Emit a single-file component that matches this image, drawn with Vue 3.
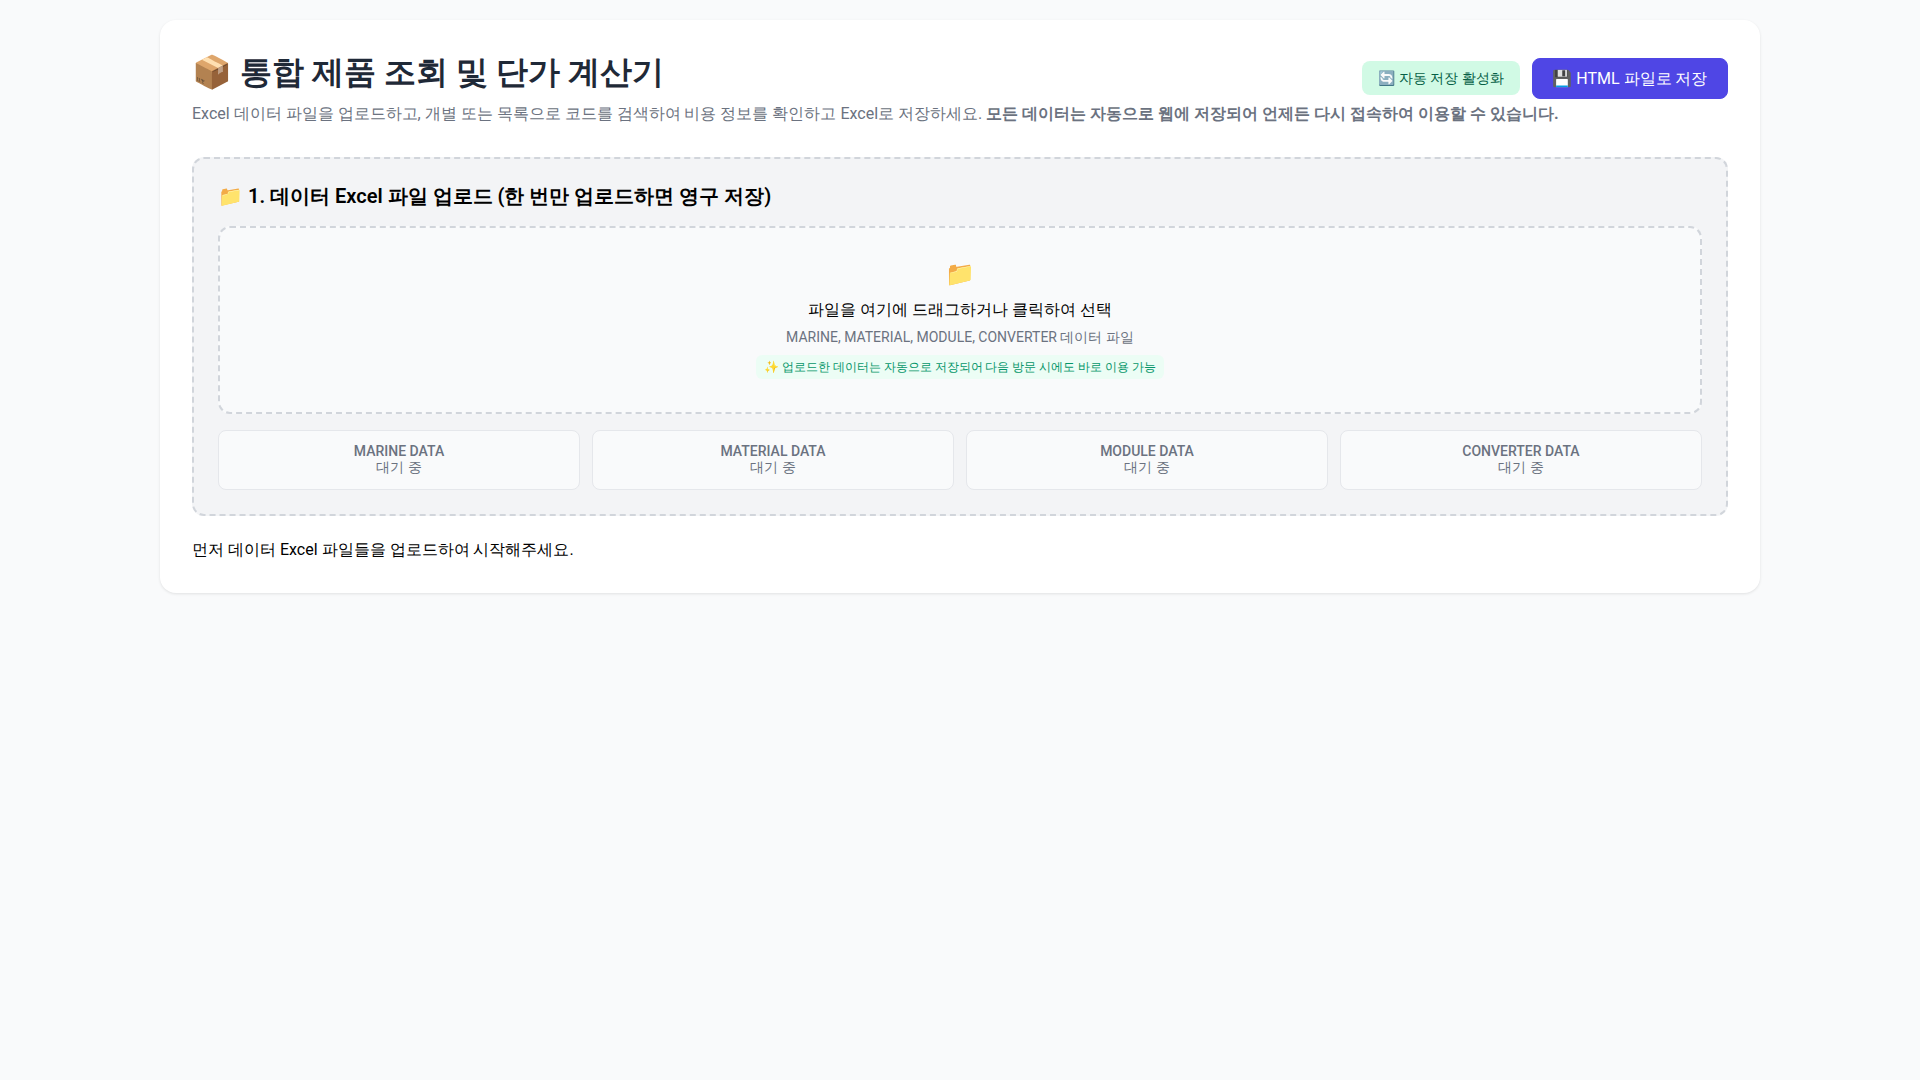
<template>
  <div class="page">
    <div class="container">
      <header class="head">
        <h1 class="title">📦 통합 제품 조회 및 단가 계산기</h1>
        <div class="head-actions">
          <span class="autosave">🔄 자동 저장 활성화</span>
          <button class="save-btn">💾 HTML 파일로 저장</button>
        </div>
      </header>
      <p class="desc">
        Excel 데이터 파일을 업로드하고, 개별 또는 목록으로 코드를 검색하여 비용 정보를 확인하고 Excel로 저장하세요.
        <strong>모든 데이터는 자동으로 웹에 저장되어 언제든 다시 접속하여 이용할 수 있습니다.</strong>
      </p>

      <section class="upload">
        <h2 class="upload-title">📁 1. 데이터 Excel 파일 업로드 (한 번만 업로드하면 영구 저장)</h2>
        <div class="drop">
          <div class="drop-icon">📁</div>
          <div class="drop-main">파일을 여기에 드래그하거나 클릭하여 선택</div>
          <div class="drop-sub">MARINE, MATERIAL, MODULE, CONVERTER 데이터 파일</div>
          <div class="drop-note">✨ 업로드한 데이터는 자동으로 저장되어 다음 방문 시에도 바로 이용 가능</div>
        </div>
        <div class="status-grid">
          <div v-for="item in files" :key="item" class="status">
            <div class="status-name">{{ item }}</div>
            <div class="status-state">대기 중</div>
          </div>
        </div>
      </section>

      <p class="hint">먼저 데이터 Excel 파일들을 업로드하여 시작해주세요.</p>
    </div>
  </div>
</template>

<script setup>
const files = ['MARINE DATA', 'MATERIAL DATA', 'MODULE DATA', 'CONVERTER DATA'];
</script>

<style>
html, body {
  margin: 0;
  background: #f9fafb;
}
</style>

<style scoped>
.page {
  min-height: 1080px;
  box-sizing: border-box;
  padding: 20px 160px;
  background: #f9fafb;
  font-family: Roboto, sans-serif;
}

.container {
  background: #fff;
  border-radius: 16px;
  padding: 32px 32px 31px;
  box-shadow: 0 1px 3px rgba(0, 0, 0, 0.1);
}

.head {
  display: flex;
  justify-content: space-between;
  align-items: flex-start;
  height: 47px;
}

.title {
  margin: 0;
  font-size: 32px;
  line-height: 40px;
  font-weight: 700;
  color: #1f2937;
}

.desc {
  margin: 3px 0 31px;
  font-size: 16px;
  line-height: 24px;
  color: #6b7280;
  white-space: nowrap;
}

.head-actions {
  display: flex;
  align-items: flex-start;
  gap: 12px;
  margin-top: 6px;
}

.autosave {
  margin-top: 3px;
  background: #d1fae5;
  color: #065f46;
  font-size: 14px;
  line-height: 20px;
  padding: 7px 16px;
  border-radius: 8px;
}

.save-btn {
  background: #4f46e5;
  color: #fff;
  border: 1px solid #4f46e5;
  border-radius: 8px;
  font-family: inherit;
  font-size: 16px;
  line-height: 25px;
  padding: 7px 19.5px;
  white-space: nowrap;
}

.upload {
  background: #f3f4f6;
  border: 2px dashed #d1d5db;
  border-radius: 12px;
  padding: 24px;
}

.upload-title {
  margin: 0 0 16px;
  font-size: 20px;
  line-height: 27px;
  font-weight: 600;
  color: #000;
}

.drop {
  background: #f9fafb;
  border: 2px dashed #d1d5db;
  border-radius: 12px;
  padding: 30px 32px 33px;
  text-align: center;
}

.drop-icon {
  font-size: 24px;
  line-height: 32px;
  margin-bottom: 8px;
}

.drop-main {
  font-size: 16px;
  line-height: 24px;
  color: #000;
}

.drop-sub {
  margin-top: 5px;
  font-size: 14px;
  line-height: 20px;
  color: #6b7280;
}

.drop-note {
  display: inline-block;
  margin-top: 8px;
  padding: 4px 8px;
  background: #ecfdf5;
  color: #059669;
  font-size: 12px;
  line-height: 16px;
  border-radius: 6px;
}

.status-grid {
  display: grid;
  grid-template-columns: repeat(4, 1fr);
  gap: 12px;
  margin-top: 16px;
}

.status {
  background: #f9fafb;
  border: 1px solid #e5e7eb;
  border-radius: 8px;
  padding: 12px 12px 14px;
  text-align: center;
  font-size: 14px;
  line-height: 17px;
}

.status-name {
  font-weight: 500;
  color: #6b7280;
}

.status-state {
  line-height: 15px;
  color: #6b7280;
}

.hint {
  margin: 22px 0 0;
  font-size: 16px;
  line-height: 24px;
  color: #000;
}
</style>
